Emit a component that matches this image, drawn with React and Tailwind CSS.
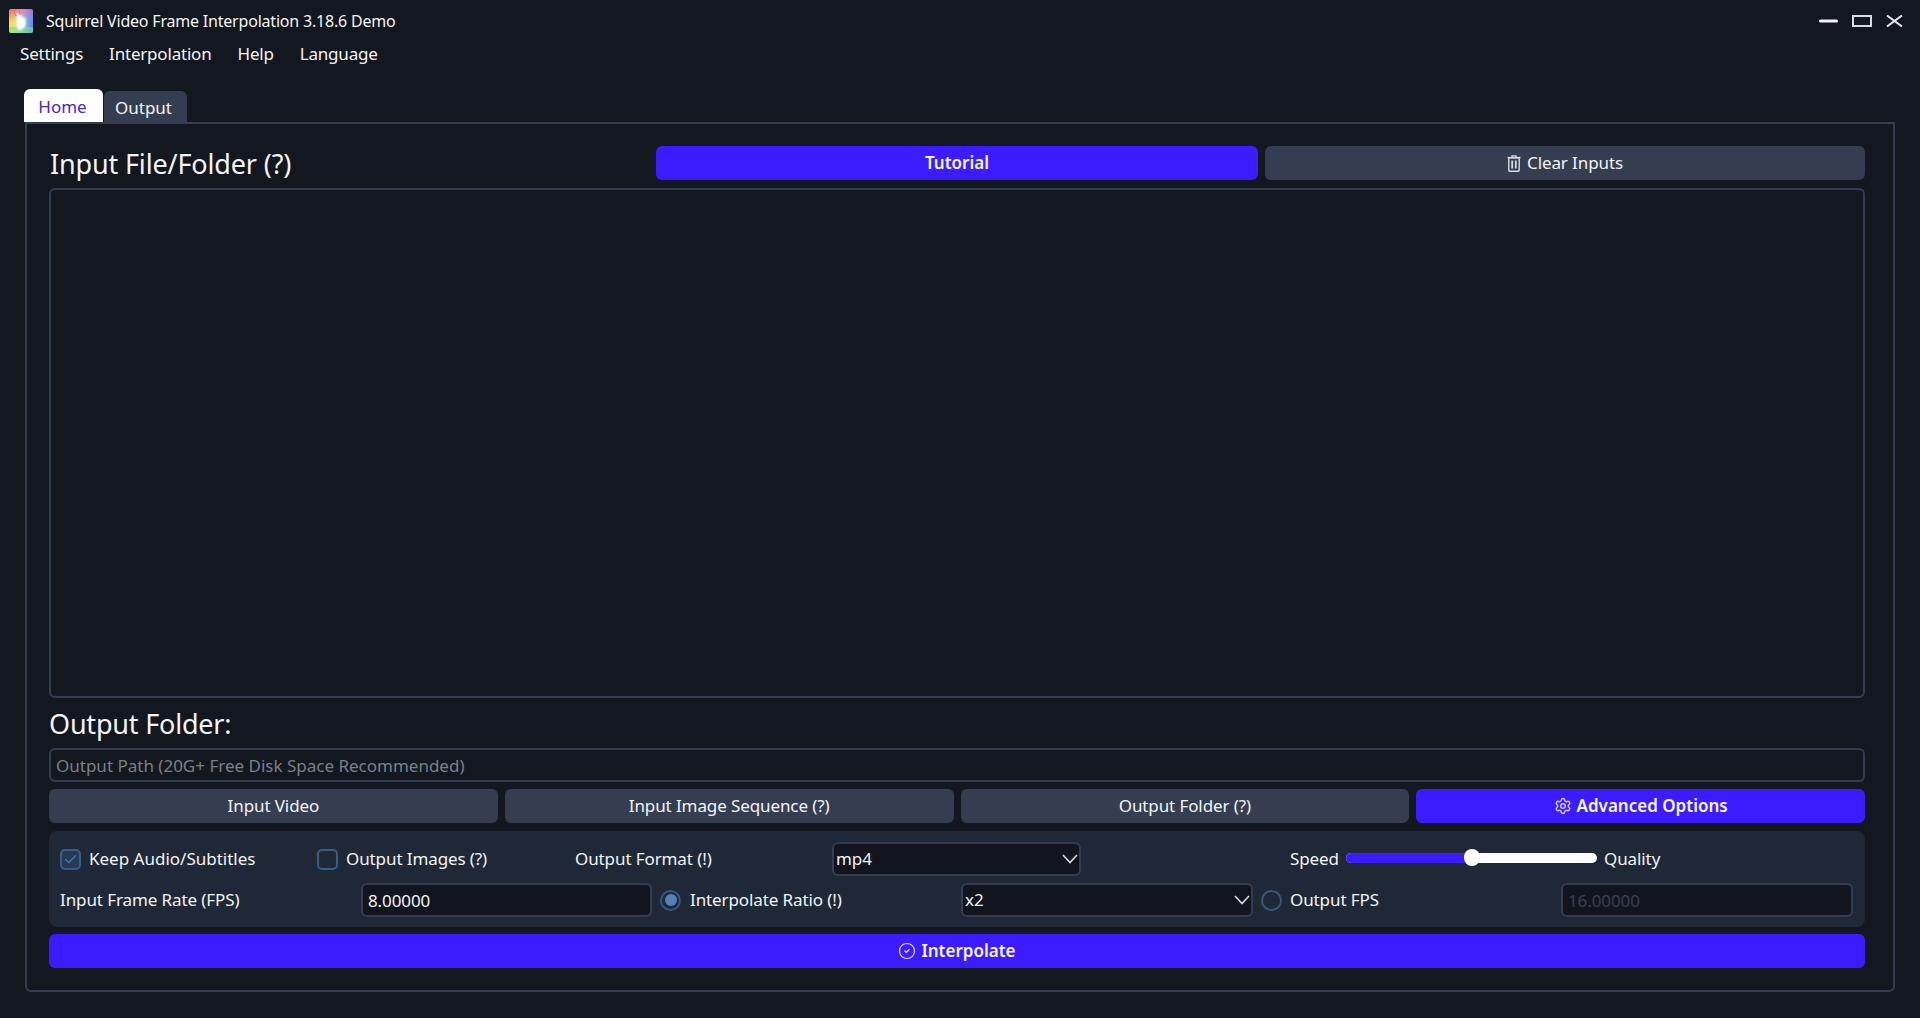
import { Check, CircleCheck, Settings } from 'lucide-react'

const font = "font-['Noto_Sans',sans-serif]"

function Logo() {
  return (
    <svg width="24" height="24" viewBox="0 0 24 24" className="shrink-0">
      <defs>
        <linearGradient id="rainbow" x1="0" y1="0" x2="1" y2="0.15">
          <stop offset="0" stopColor="#f7d94a" />
          <stop offset="0.3" stopColor="#e9e36a" />
          <stop offset="0.65" stopColor="#7fd6c8" />
          <stop offset="1" stopColor="#6f8ff0" />
        </linearGradient>
        <linearGradient id="topfade" x1="0" y1="0" x2="1" y2="0">
          <stop offset="0" stopColor="#f56a5a" />
          <stop offset="0.5" stopColor="#f07fb8" />
          <stop offset="1" stopColor="#a76be8" />
        </linearGradient>
        <linearGradient id="mask" x1="0" y1="0" x2="0" y2="1">
          <stop offset="0" stopColor="#fff" />
          <stop offset="0.55" stopColor="#fff" stopOpacity="0" />
        </linearGradient>
        <mask id="top">
          <rect width="24" height="24" fill="url(#mask)" />
        </mask>
        <filter id="soft">
          <feGaussianBlur stdDeviation="0.8" />
        </filter>
      </defs>
      <rect width="24" height="24" rx="2.5" fill="url(#rainbow)" />
      <rect width="24" height="24" rx="2.5" fill="url(#topfade)" mask="url(#top)" />
      <rect x="0" y="18" width="24" height="6" rx="2" fill="#7fe08a" opacity="0.55" />
      <path d="M6 2l3 5 1-4 4 6 2-1 1 5-1 5-4 3H9l-2-5 1-5z" fill="#fff" filter="url(#soft)" />
      <path d="M5 2l2 5M10 2l1.5 4" stroke="#e0584e" strokeWidth="1.2" opacity="0.7" />
    </svg>
  )
}

function TrashIcon() {
  return (
    <svg width="14" height="17" viewBox="0 0 14 17" fill="none" stroke="#d8dce3" strokeWidth="1.4" className="shrink-0">
      <path d="M0.5 2.6h13" />
      <path d="M5 2.4V0.9h4v1.5" />
      <rect x="1.8" y="2.8" width="10.4" height="13.4" rx="1" />
      <path d="M5.2 5.5v8M8.8 5.5v8" strokeWidth="1.8" />
    </svg>
  )
}

function Chevron() {
  return (
    <svg width="16" height="10" viewBox="0 0 16 10" fill="none" className="shrink-0">
      <path d="M1 1l7 7.5L15 1" stroke="#d8dce3" strokeWidth="1.6" />
    </svg>
  )
}

function PrimaryButton({ children, className = '' }) {
  return (
    <button className={`flex h-[34px] items-center justify-center gap-[5px] rounded-md bg-[#3c1cff] text-[17px] font-semibold text-[#f3f4f6] ${className}`}>
      {children}
    </button>
  )
}

function GrayButton({ children, className = '' }) {
  return (
    <button className={`flex h-[34px] items-center justify-center gap-[6px] rounded-md bg-[#343e50] text-[17px] tracking-[-0.1px] text-[#f3f4f6] ${className}`}>
      {children}
    </button>
  )
}

function Select({ value, className = '' }) {
  return (
    <div className={`flex h-[34px] items-center justify-between rounded-md border-2 border-[#343e50] bg-[#12151e] pl-[2px] pr-[1px] text-[17px] text-[#f3f4f6] ${className}`}>
      <span>{value}</span>
      <Chevron />
    </div>
  )
}

function TextBox({ value, disabled, className = '' }) {
  return (
    <input
      readOnly
      value={value}
      className={`h-[34px] rounded-md border-2 border-[#343e50] bg-[#12151e] px-[5px] text-[17px] outline-none ${disabled ? 'text-[#374151]' : 'text-[#f3f4f6]'} ${className}`}
    />
  )
}

function CheckBox({ checked }) {
  return (
    <span className={`flex h-[21px] w-[21px] shrink-0 items-center justify-center rounded-[5px] border-[2.5px] border-[#3a5c88] ${checked ? 'bg-[#263a55]' : 'bg-[#1e2836]'}`}>
      {checked && <Check size={15} strokeWidth={1.8} className="text-[#4f7cb5]" />}
    </span>
  )
}

function Radio({ checked }) {
  return (
    <span className="flex h-[21px] w-[21px] shrink-0 items-center justify-center rounded-full border-[2.5px] border-[#37577f] bg-[#1e2836]">
      {checked && <span className="h-[12px] w-[12px] rounded-full bg-[#5680bd]" />}
    </span>
  )
}

export default function App() {
  return (
    <div className={`flex h-[1018px] w-full flex-col overflow-hidden bg-[#13171f] text-[#f3f4f6] ${font}`}>
      {/* title bar */}
      <div className="flex h-[42px] items-center pl-[9px] pr-[17px]">
        <Logo />
        <span className="ml-[13px] text-[16px] tracking-[-0.2px]">Squirrel Video Frame Interpolation 3.18.6 Demo</span>
        <div className="ml-auto flex items-center gap-[14px]">
          <svg width="19" height="12" viewBox="0 0 19 12">
            <path d="M1.5 6h16" stroke="#f3f4f6" strokeWidth="3" strokeLinecap="round" />
          </svg>
          <svg width="20" height="12" viewBox="0 0 20 12" fill="none">
            <rect x="1" y="1" width="18" height="10" stroke="#d8dce3" strokeWidth="2" />
          </svg>
          <svg width="17" height="12" viewBox="0 0 17 12" fill="none">
            <path d="M1 0.5L16 11.5M16 0.5L1 11.5" stroke="#e5e7eb" strokeWidth="2" />
          </svg>
        </div>
      </div>

      {/* menu bar */}
      <div className="flex h-[24px] items-center gap-[26px] pl-[20px] text-[17px] tracking-[-0.2px]">
        <span>Settings</span>
        <span>Interpolation</span>
        <span>Help</span>
        <span>Language</span>
      </div>

      {/* tabs */}
      <div className="mt-[23px] flex h-[33px] items-end pl-[24px] text-[17px]">
        <div className="flex h-[33px] w-[79px] items-center justify-center rounded-t-md bg-white pr-[2px] pt-[2px] text-[#4526c9]">Home</div>
        <div className="ml-[1px] flex h-[31px] w-[83px] items-center justify-center rounded-t-md bg-[#343e50] pr-[4px] pt-[2px]">Output</div>
      </div>

      <div className="mx-[25px] rounded-b-md border-2 border-[#343e50] pb-[22px] pl-[22px] pr-[28px] pt-[22px]">
        <div className="flex h-[34px] items-center">
          <div className="w-[607px] pl-[1px] pt-[2px] text-[27px] tracking-[-0.15px]">Input File/Folder (?)</div>
          <div className="flex flex-1 gap-[7px]">
            <PrimaryButton className="w-[602px]">Tutorial</PrimaryButton>
            <GrayButton className="flex-1">
              <TrashIcon />
              Clear Inputs
            </GrayButton>
          </div>
        </div>

        <div className="mt-[8px] h-[510px] rounded-md border-2 border-[#343e50]" />

        <div className="flex h-[50px] items-center pt-[2px] text-[27px] tracking-[-0.2px]">Output Folder:</div>
        <input
          readOnly
          placeholder="Output Path (20G+ Free Disk Space Recommended)"
          className="h-[34px] w-full rounded-md border-2 border-[#343e50] bg-[#13171f] px-[5px] text-[17px] outline-none placeholder:text-[#7b8087]"
        />

        <div className="mt-[7px] grid grid-cols-4 gap-[7px]">
          <GrayButton>Input Video</GrayButton>
          <GrayButton>Input Image Sequence (?)</GrayButton>
          <GrayButton>Output Folder (?)</GrayButton>
          <PrimaryButton>
            <Settings size={18} strokeWidth={2} className="text-[#cfc6ff]" />
            Advanced Options
          </PrimaryButton>
        </div>

        <div className="mt-[8px] flex h-[96px] flex-col gap-[7px] rounded-lg bg-[#1e2836] pl-[11px] pt-[11px] text-[17px] tracking-[-0.1px]">
          <div className="flex h-[34px] items-center">
            <div className="flex w-[257px] items-center gap-[8px]">
              <CheckBox checked />
              <span className="tracking-normal">Keep Audio/Subtitles</span>
            </div>
            <div className="flex w-[258px] items-center gap-[8px]">
              <CheckBox />
              <span>Output Images (?)</span>
            </div>
            <div className="w-[257px]">Output Format (!)</div>
            <Select value="mp4" className="w-[249px]" />
            <div className="w-[209px]" />
            <div className="w-[56px]">Speed</div>
            <div className="relative mb-[3px] h-[10px] w-[251px] rounded-full bg-white">
              <div className="h-full w-[125px] rounded-l-full bg-[#3c1cff]" />
              <div className="absolute left-[118px] top-[-4px] h-[17px] w-[16px] rounded-full bg-white" />
            </div>
            <div className="pl-[7px]">Quality</div>
          </div>

          <div className="flex h-[34px] items-center">
            <div className="w-[301px]">Input Frame Rate (FPS)</div>
            <TextBox value="8.00000" className="w-[291px]" />
            <div className="ml-[8px] flex w-[301px] items-center gap-[9px]">
              <Radio checked />
              <span>Interpolate Ratio (!)</span>
            </div>
            <Select value="x2" className="w-[292px]" />
            <div className="ml-[8px] flex w-[300px] items-center gap-[8px]">
              <Radio />
              <span>Output FPS</span>
            </div>
            <TextBox value="16.00000" disabled className="w-[292px]" />
          </div>
        </div>

        <PrimaryButton className="mt-[7px] w-full">
          <CircleCheck size={18} strokeWidth={1.6} className="text-[#e2dcff]" />
          Interpolate
        </PrimaryButton>
      </div>
    </div>
  )
}
